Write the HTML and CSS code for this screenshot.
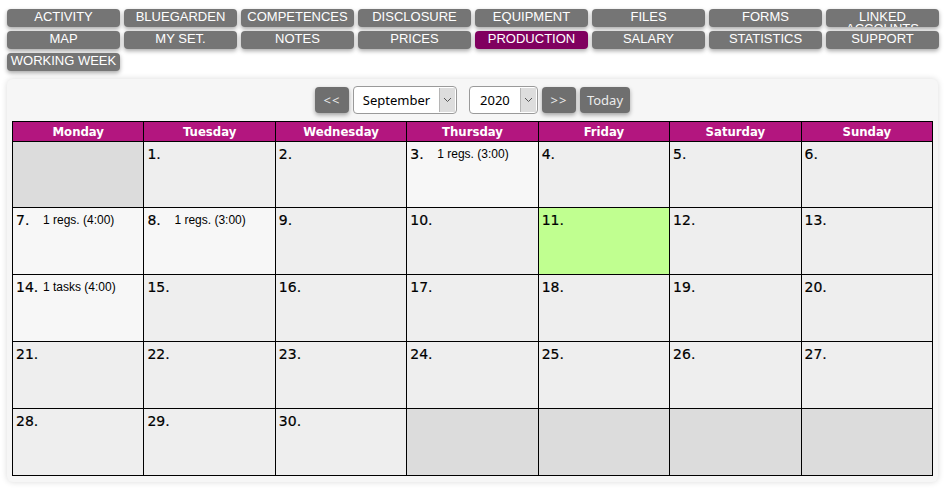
FILE: index.html
```html
<!DOCTYPE html>
<html>
<head>
  <meta charset="utf-8">
  <title>Production - Calendar</title>
  <link rel="stylesheet" href="styles.css">
</head>
<body>
  <!-- Main menu -->
  <div class="menu">
    <div class="menu-btn">ACTIVITY</div>
    <div class="menu-btn">BLUEGARDEN</div>
    <div class="menu-btn">COMPETENCES</div>
    <div class="menu-btn">DISCLOSURE</div>
    <div class="menu-btn">EQUIPMENT</div>
    <div class="menu-btn">FILES</div>
    <div class="menu-btn">FORMS</div>
    <div class="menu-btn">LINKED ACCOUNTS</div>
    <div class="menu-btn">MAP</div>
    <div class="menu-btn">MY SET.</div>
    <div class="menu-btn">NOTES</div>
    <div class="menu-btn">PRICES</div>
    <div class="menu-btn active">PRODUCTION</div>
    <div class="menu-btn">SALARY</div>
    <div class="menu-btn">STATISTICS</div>
    <div class="menu-btn">SUPPORT</div>
    <div class="menu-btn">WORKING WEEK</div>
  </div>

  <div class="panel">
    <!-- Month navigation -->
    <div class="cal-nav">
      <button class="nav-btn nav-arrow">&lt;&lt;</button>
      <div class="pick pick-month">
        <span class="pick-value">September</span>
        <span class="pick-arrow"><svg width="9" height="6" viewBox="0 0 9 6"><path d="M1 1l3.5 3.5L8 1" fill="none" stroke="#555" stroke-width="1"/></svg></span>
      </div>
      <div class="pick pick-year">
        <span class="pick-value">2020</span>
        <span class="pick-arrow"><svg width="9" height="6" viewBox="0 0 9 6"><path d="M1 1l3.5 3.5L8 1" fill="none" stroke="#555" stroke-width="1"/></svg></span>
      </div>
      <button class="nav-btn nav-arrow">&gt;&gt;</button>
      <button class="nav-btn">Today</button>
    </div>

    <table class="calendar">
      <thead>
        <tr>
          <th>Monday</th>
          <th>Tuesday</th>
          <th>Wednesday</th>
          <th>Thursday</th>
          <th>Friday</th>
          <th>Saturday</th>
          <th>Sunday</th>
        </tr>
      </thead>
      <tbody>
        <tr class="first">
          <td class="off"></td>
          <td><span class="day">1.</span></td>
          <td><span class="day">2.</span></td>
          <td class="has-items"><span class="day">3.</span><span class="items">1 regs. (3:00)</span></td>
          <td><span class="day">4.</span></td>
          <td><span class="day">5.</span></td>
          <td><span class="day">6.</span></td>
        </tr>
        <tr>
          <td class="has-items"><span class="day">7.</span><span class="items">1 regs. (4:00)</span></td>
          <td class="has-items"><span class="day">8.</span><span class="items">1 regs. (3:00)</span></td>
          <td><span class="day">9.</span></td>
          <td><span class="day">10.</span></td>
          <td class="today"><span class="day">11.</span></td>
          <td><span class="day">12.</span></td>
          <td><span class="day">13.</span></td>
        </tr>
        <tr>
          <td class="has-items"><span class="day">14.</span><span class="items">1 tasks (4:00)</span></td>
          <td><span class="day">15.</span></td>
          <td><span class="day">16.</span></td>
          <td><span class="day">17.</span></td>
          <td><span class="day">18.</span></td>
          <td><span class="day">19.</span></td>
          <td><span class="day">20.</span></td>
        </tr>
        <tr>
          <td><span class="day">21.</span></td>
          <td><span class="day">22.</span></td>
          <td><span class="day">23.</span></td>
          <td><span class="day">24.</span></td>
          <td><span class="day">25.</span></td>
          <td><span class="day">26.</span></td>
          <td><span class="day">27.</span></td>
        </tr>
        <tr>
          <td><span class="day">28.</span></td>
          <td><span class="day">29.</span></td>
          <td><span class="day">30.</span></td>
          <td class="off"></td>
          <td class="off"></td>
          <td class="off"></td>
          <td class="off"></td>
        </tr>
      </tbody>
    </table>
  </div>
</body>
</html>
```

FILE: styles.css
```css
body {
  margin: 0;
  padding: 9px 7px;
  background: #ffffff;
  font-family: "Liberation Sans", Arial, sans-serif;
  color: #000;
}

.menu {
  display: grid;
  grid-template-columns: repeat(8, 113px);
  gap: 4px;
}

.menu-btn {
  height: 18px;
  box-sizing: border-box;
  padding-top: 2px;
  overflow: hidden;
  background: #757575;
  color: #ffffff;
  font-size: 13px;
  line-height: 12px;
  text-align: center;
  border-radius: 4px;
  box-shadow: 0 2px 4px rgba(0,0,0,0.35);
}

.menu-btn.active {
  background: #80005f;
}

.panel {
  width: 931px;
  box-sizing: border-box;
  margin-top: 8px;
  padding: 6px 5px 6px 5px;
  background: #f6f6f6;
  border-radius: 6px;
  box-shadow: 0 0 6px rgba(0,0,0,0.15);
}

.cal-nav {
  display: flex;
  justify-content: center;
  align-items: center;
  gap: 4px;
  height: 29px;
  margin-bottom: 7px;
}

.nav-btn {
  height: 26px;
  padding: 0 7px;
  border: none;
  border-radius: 4px;
  background: #6f6f6f;
  color: #ececec;
  font-family: "Noto Sans", sans-serif;
  font-size: 13px;
  box-shadow: 0 2px 4px rgba(0,0,0,0.35);
}

.nav-arrow {
  width: 34px;
  padding: 0;
  letter-spacing: 1px;
}

.pick {
  display: flex;
  height: 28px;
  box-sizing: border-box;
  border: 1px solid #9a9a9a;
  border-radius: 4px;
  background: #ffffff;
  overflow: hidden;
  font-family: "Noto Sans", sans-serif;
  font-size: 13px;
}

.pick-month {
  width: 104px;
}

.pick-year {
  width: 69px;
  margin-left: 8px;
}

.pick-value {
  flex: 1;
  text-align: center;
  line-height: 26px;
}

.pick-arrow {
  width: 15px;
  margin: 1px 1px 1px 0;
  background: #dddddd;
  border-left: 1px solid #b5b5b5;
  display: flex;
  align-items: center;
  justify-content: center;
}

.calendar {
  width: 921px;
  border-collapse: collapse;
  table-layout: fixed;
  border: 1px solid #000;
}

.calendar th {
  height: 19px;
  padding: 0;
  background: #b3167f;
  color: #ffffff;
  font-family: "DejaVu Sans", sans-serif;
  font-stretch: condensed;
  font-size: 13px;
  font-weight: bold;
  border: 1px solid #000;
}

.calendar td {
  height: 67px;
  box-sizing: border-box;
  padding: 3px 3px;
  vertical-align: top;
  background: #eeeeee;
  border: 1px solid #000;
}

.calendar tr.first td {
  height: 66px;
}

.calendar td.off {
  background: #dcdcdc;
}

.calendar td.has-items {
  background: #f7f7f7;
}

.calendar td.today {
  background: #c0ff90;
}

.day {
  display: inline-block;
  min-width: 27px;
  font-family: "DejaVu Sans", sans-serif;
  font-size: 14px;
  line-height: 18px;
  -webkit-text-stroke: 0.2px #000;
}

.items {
  font-size: 12px;
  position: relative;
  top: -1px;
}
```
